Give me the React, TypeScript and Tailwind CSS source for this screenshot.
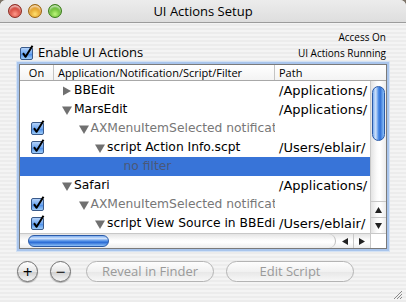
import type { ReactNode } from "react"

type Row = {
  on?: boolean
  level: number
  tri?: "right" | "down"
  name: string
  dim?: boolean
  path?: string
  selected?: boolean
}

const rows: Row[] = [
  { level: 0, tri: "right", name: "BBEdit", path: "/Applications/" },
  { level: 0, tri: "down", name: "MarsEdit", path: "/Applications/" },
  { on: true, level: 1, tri: "down", name: "AXMenuItemSelected notification", dim: true },
  { on: true, level: 2, tri: "down", name: "script Action Info.scpt", path: "/Users/eblair/" },
  { level: 3, name: "no filter", selected: true },
  { level: 0, tri: "down", name: "Safari", path: "/Applications/" },
  { on: true, level: 1, tri: "down", name: "AXMenuItemSelected notification", dim: true },
  { on: true, level: 2, tri: "down", name: "script View Source in BBEdit.scpt", path: "/Users/eblair/" },
]

const font = "font-['Open_Sans','DejaVu_Sans',sans-serif]"

function AquaCheck() {
  return (
    <svg width="15" height="15" viewBox="0 0 15 15">
      <defs>
        <linearGradient id="cb" x1="0" y1="0" x2="0" y2="1">
          <stop offset="0" stopColor="#b9d6fb" />
          <stop offset="0.5" stopColor="#6fa7f0" />
          <stop offset="0.55" stopColor="#4d8ee8" />
          <stop offset="1" stopColor="#a6d3fb" />
        </linearGradient>
      </defs>
      <rect x="0.5" y="2.5" width="12" height="12" rx="1.5" fill="url(#cb)" stroke="#3a5a8a" />
      <path d="M3 8.2 L5.6 11.8 L12.5 0.8" fill="none" stroke="#000" strokeWidth="2" strokeLinejoin="round" />
    </svg>
  )
}

function Triangle({ dir }: { dir: "right" | "down" }) {
  return (
    <svg width="10" height="10" viewBox="0 0 10 10" className="shrink-0">
      {dir === "right" ? (
        <path d="M1 0.5 L9 5 L1 9.5 Z" fill="#707070" />
      ) : (
        <path d="M0 1.5 L10 1.5 L5 10 Z" fill="#707070" />
      )}
    </svg>
  )
}

function Light({ from, to, ring }: { from: string; to: string; ring: string }) {
  return (
    <div
      className="w-[14px] h-[14px] rounded-full border"
      style={{
        borderColor: ring,
        background: `radial-gradient(circle at 50% 75%, ${to} 0%, ${from} 70%)`,
        boxShadow: "inset 0 2px 2px rgba(255,255,255,0.7)",
      }}
    />
  )
}

function RoundButton({ children }: { children: ReactNode }) {
  return (
    <div className="w-[21px] h-[21px] rounded-full border border-[#6f6f6f] bg-[linear-gradient(180deg,#ffffff_0%,#e6e6e6_50%,#d2d2d2_55%,#f6f6f6_100%)] shadow-[0_1px_1px_rgba(0,0,0,0.3)] flex items-center justify-center text-[17px] leading-none text-black">
      {children}
    </div>
  )
}

function PillButton({ label, width }: { label: string; width: string }) {
  return (
    <div
      className={`${width} h-[21px] rounded-full border border-[#b4b4b4] bg-[linear-gradient(180deg,#fdfdfd_0%,#f1f1f1_50%,#e8e8e8_55%,#f7f7f7_100%)] flex items-center justify-center text-[13px] text-[#9a9a9a]`}
    >
      {label}
    </div>
  )
}

export default function App() {
  return (
    <div className={`w-[406px] h-[302px] bg-[#7d7468] ${font} text-black overflow-hidden`}>
      <div className="w-full h-full rounded-t-[6px] overflow-hidden flex flex-col bg-[repeating-linear-gradient(180deg,#ececec_0px,#ececec_2px,#f4f4f4_2px,#f4f4f4_4px)]">
        {/* title bar */}
        <div className="relative h-[23px] shrink-0 border-b border-[#9c9c9c] bg-[linear-gradient(180deg,#ececec_0%,#dedede_100%)] flex items-center">
          <div className="flex gap-[6px] pl-[8px]">
            <Light from="#c42a20" to="#ff9a8a" ring="#8a2a20" />
            <Light from="#d98a10" to="#ffe070" ring="#9a6410" />
            <Light from="#4ca81c" to="#bdf57a" ring="#3a7a18" />
          </div>
          <div className="absolute inset-0 flex items-center justify-center text-[13px] pt-[1px]">UI Actions Setup</div>
        </div>

        {/* top controls */}
        <div className="flex justify-between pl-[20px] pr-[20px] pt-[5px] h-[41px] shrink-0">
          <div className="flex items-center gap-[3px] pt-[13px]">
            <AquaCheck />
            <span className="text-[13px] leading-none">Enable UI Actions</span>
          </div>
          <div className="flex flex-col items-end text-[10px] leading-[16px] pt-[1px]">
            <span>Access On</span>
            <span>UI Actions Running</span>
          </div>
        </div>

        {/* table */}
        <div className="mx-[19px] h-[185px] shrink-0 border border-[#7a7a7a] bg-white flex flex-col shadow-[0_0_0_2px_#a9c5ec,0_0_0_3px_#d4e2f4]">
          <div className="h-[16px] shrink-0 flex border-b border-[#a8a8a8] bg-[linear-gradient(180deg,#ffffff_0%,#f3f3f3_100%)] text-[11px] leading-[15px]">
            <div className="w-[34px] border-r border-[#c4c4c4] text-center">On</div>
            <div className="w-[221px] border-r border-[#c4c4c4] pl-[4px] whitespace-nowrap overflow-hidden">
              Application/Notification/Script/Filter
            </div>
            <div className="flex-1 pl-[4px]">Path</div>
          </div>

          <div className="flex-1 flex min-h-0">
            <div className="flex-1 flex flex-col font-['DejaVu_Sans',sans-serif]">
              {rows.map((r, i) => (
                <div
                  key={i}
                  className={`h-[19px] flex items-center whitespace-nowrap ${r.selected ? "bg-[#3874d8]" : ""}`}
                >
                  <div className="w-[34px] flex justify-center pl-[2px] pb-[2px]">{r.on && <AquaCheck />}</div>
                  <div
                    className="w-[221px] overflow-hidden flex items-center gap-[2px] text-[12.3px]"
                    style={{ paddingLeft: 8 + r.level * 16.5 }}
                  >
                    {r.tri ? <Triangle dir={r.tri} /> : <div className="w-[10px] shrink-0" />}
                    <span className={r.selected ? "text-[#4a5878]" : r.dim ? "text-[#777777]" : ""}>{r.name}</span>
                  </div>
                  <div className="flex-1 overflow-hidden pl-[4px] text-[13px]">{r.path}</div>
                </div>
              ))}
            </div>

            {/* vertical scroller */}
            <div className="w-[16px] shrink-0 border-l border-[#c8c8c8] bg-[linear-gradient(90deg,#e4e4e4_0%,#fbfbfb_40%,#ffffff_60%,#ececec_100%)] flex flex-col">
              <div className="pt-[5px] px-[1px] flex-1">
                <div className="h-[55px] rounded-full border border-[#2a5aa8] bg-[linear-gradient(90deg,#7eaef0_0%,#cfe2fb_25%,#4e8de6_50%,#2f6fd6_65%,#8cc0f8_100%)]" />
              </div>
              <div className="h-[16px] border-t border-[#c8c8c8] flex items-center justify-center">
                <svg width="7" height="6" viewBox="0 0 7 6">
                  <path d="M3.5 0 L7 6 L0 6 Z" fill="#222" />
                </svg>
              </div>
              <div className="h-[16px] border-t border-[#c8c8c8] flex items-center justify-center">
                <svg width="7" height="6" viewBox="0 0 7 6">
                  <path d="M0 0 L7 0 L3.5 6 Z" fill="#222" />
                </svg>
              </div>
            </div>
          </div>

          {/* horizontal scroller */}
          <div className="h-[15px] shrink-0 flex border-t border-[#c8c8c8]">
            <div className="flex-1 flex bg-[linear-gradient(180deg,#e4e4e4_0%,#fbfbfb_40%,#ffffff_60%,#ececec_100%)]">
              <div className="flex-1 pl-[8px] pt-[1px] rounded-r-full border-r border-[#bdbdbd]">
                <div className="w-[81px] h-[12px] rounded-full border border-[#2a5aa8] bg-[linear-gradient(180deg,#7eaef0_0%,#cfe2fb_25%,#4e8de6_50%,#2f6fd6_65%,#8cc0f8_100%)]" />
              </div>
              <div className="w-[17px] flex items-center justify-center">
                <svg width="6" height="7" viewBox="0 0 6 7">
                  <path d="M6 0 L6 7 L0 3.5 Z" fill="#222" />
                </svg>
              </div>
              <div className="w-[17px] border-l border-[#c8c8c8] flex items-center justify-center">
                <svg width="6" height="7" viewBox="0 0 6 7">
                  <path d="M0 0 L6 3.5 L0 7 Z" fill="#222" />
                </svg>
              </div>
            </div>
            <div className="w-[16px] bg-white border-l border-[#c8c8c8]" />
          </div>
        </div>

        {/* buttons */}
        <div className="flex items-center pl-[17px] pt-[12px] gap-[12px]">
          <RoundButton>+</RoundButton>
          <RoundButton>−</RoundButton>
          <div className="flex gap-[12px] pl-[3px]">
            <PillButton label="Reveal in Finder" width="w-[128px]" />
            <PillButton label="Edit Script" width="w-[128px]" />
          </div>
        </div>

        <div className="flex-1 flex justify-end items-end pr-[3px] pb-[2px]">
          <svg width="11" height="11" viewBox="0 0 11 11">
            <path d="M10 2 L2 10 M10 5 L5 10 M10 8 L8 10" stroke="#8a8a8a" strokeWidth="1" />
          </svg>
        </div>
      </div>
    </div>
  )
}
